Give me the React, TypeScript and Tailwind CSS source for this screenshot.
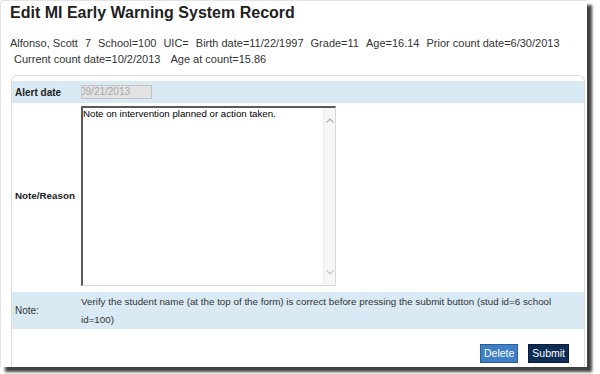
import React from 'react';

const font = { fontFamily: '"Liberation Sans", Arial, sans-serif' };

const infoLine1 = ['Alfonso, Scott', '7', 'School=100', 'UIC=', 'Birth date=11/22/1997', 'Grade=11', 'Age=16.14', 'Prior count date=6/30/2013'];
const infoLine2 = ['Current count date=10/2/2013', 'Age at count=15.86'];

const ScrollTextarea: React.FC<{ text: string }> = ({ text }) => (
  <div className="relative w-[255px] h-[180px] bg-white border-t-2 border-l-2 border-t-[#5a5a5a] border-l-[#5a5a5a] border-r border-b border-r-[#d8d8d8] border-b-[#d8d8d8]">
    <div className="pr-[14px] text-[9.7px] leading-[12px] text-black">{text}</div>
    <div className="absolute right-0 top-0 bottom-0 w-[12px] bg-[#f6f6f6] border-l border-[#ececec] flex flex-col justify-between items-center py-[10px]">
      <svg width="8" height="5" viewBox="0 0 8 5">
        <path d="M0.5 4.5 L4 1 L7.5 4.5" fill="none" stroke="#b0b0b0" strokeWidth="1.2" />
      </svg>
      <svg width="8" height="5" viewBox="0 0 8 5">
        <path d="M0.5 0.5 L4 4 L7.5 0.5" fill="none" stroke="#c4c4c4" strokeWidth="1.2" />
      </svg>
    </div>
  </div>
);

export default function App() {
  return (
    <div className="w-[600px] h-[374px] bg-white overflow-hidden" style={font}>
      <div className="w-[587px] h-[367px] bg-white overflow-hidden rounded-tl-[3px] border-l border-t border-[#e4e4e4] shadow-[5px_5px_3px_rgba(0,0,0,0.75)] pl-[9px] text-[#333]">
        <h1 className="mt-[2px] text-[16px] leading-[20px] font-bold text-[#222]">Edit MI Early Warning System Record</h1>
        <div className="mt-[12px] text-[11px] leading-[16px] whitespace-nowrap">
          <div className="flex gap-[7px]">
            {infoLine1.map(t => <span key={t}>{t}</span>)}
          </div>
          <div className="flex gap-[10px] pl-[4px]">
            {infoLine2.map(t => <span key={t}>{t}</span>)}
          </div>
        </div>
        <div className="mt-[8px] ml-[1px] mr-[2px] h-[300px] border border-b-0 border-[#dcdcdc] rounded-t-[6px] pt-[5px]">
          <div className="flex items-center h-[22px] bg-[#d9eaf4]">
            <div className="w-[69px] pl-[3px] text-[10px] font-bold text-[#222]">Alert date</div>
            <div className="w-[71px] h-[14px] bg-[#e3e3e3] border border-[#c4c4c4] text-[10px] leading-[12px] text-[#a8a8a8] overflow-hidden">
              <span className="-ml-[2px]">09/21/2013</span>
            </div>
          </div>
          <div className="flex items-center pt-[3px] pb-[6px]">
            <div className="w-[69px] pl-[3px] text-[9.8px] font-bold text-[#222]">Note/Reason</div>
            <ScrollTextarea text="Note on intervention planned or action taken." />
          </div>
          <div className="flex items-center h-[37px] bg-[#d9eaf4]">
            <div className="w-[69px] pl-[3px] text-[10px] text-[#333]">Note:</div>
            <div className="w-[478px] text-[9.8px] leading-[18px] text-[#333]">
              Verify the student name (at the top of the form) is correct before pressing the submit button (stud id=6 school id=100)
            </div>
          </div>
          <div className="flex justify-end gap-[10px] pt-[15px] pr-[15px]">
            <button className="h-[19px] px-[3px] bg-[#3e7fc6] border border-[#2a5f9c] text-white text-[10.5px] leading-[17px]">Delete</button>
            <button className="h-[19px] px-[3px] bg-[#0e2d56] border border-[#081d3a] text-white text-[10.5px] leading-[17px]">Submit</button>
          </div>
        </div>
      </div>
    </div>
  );
}
